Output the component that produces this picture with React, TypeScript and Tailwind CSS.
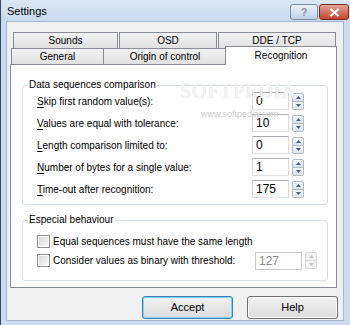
import React from 'react';

function Spin({ disabled }: { disabled?: boolean }) {
  const arrow = disabled ? '#c2c2c2' : '#4a5f86';
  const box = disabled
    ? 'flex h-[9px] items-center justify-center border border-[#d6d9dd] bg-[#f4f4f4]'
    : 'flex h-[9px] items-center justify-center border border-[#b3bbc5] bg-gradient-to-b from-[#f8fafc] to-[#dde3ea]';
  return (
    <div className="ml-[3px] flex w-[12px] flex-col">
      <div className={box + ' rounded-t-[2px]'}>
        <svg width="5" height="3" viewBox="0 0 5 3">
          <path d="M2.5 0L5 3H0z" fill={arrow} />
        </svg>
      </div>
      <div className={box + ' -mt-px rounded-b-[2px]'}>
        <svg width="5" height="3" viewBox="0 0 5 3">
          <path d="M0 0H5L2.5 3z" fill={arrow} />
        </svg>
      </div>
    </div>
  );
}

function Field({ value, disabled, w }: { value: string; disabled?: boolean; w: string }) {
  return (
    <div className="flex items-center">
      <div
        className={
          (disabled
            ? 'border-[#c9cbd0] text-[#8a8a8a] '
            : 'border-[#abadb3] border-b-[#dfe3e8] border-x-[#d5d8de] text-black ') +
          w +
          ' h-[18px] border bg-white pl-[3px] text-[12px] leading-[16px]'
        }
      >
        {value}
      </div>
      <Spin disabled={disabled} />
    </div>
  );
}

function Row({ k, rest, value }: { k: string; rest: string; value: string }) {
  return (
    <div className="flex h-[22px] items-center">
      <span className="flex-1">
        <span className="underline underline-offset-2">{k}</span>
        {rest}
      </span>
      <Field value={value} w="w-[37px]" />
    </div>
  );
}

function Check({ label }: { label: string }) {
  return (
    <div className="flex items-center">
      <div className="flex h-[13px] w-[13px] items-center justify-center border border-[#8e8f8f] bg-white">
        <div className="h-[9px] w-[9px] bg-gradient-to-br from-[#d8d8d8] to-[#f8f8f8]" />
      </div>
      <span className="ml-[3px]">{label}</span>
    </div>
  );
}

function Group({ title, children, className }: { title: string; children: React.ReactNode; className: string }) {
  return (
    <div className={'relative ml-[11px] w-[306px] rounded-[3px] border border-[#d5dfe5] ' + className}>
      <span className="absolute -top-[8px] left-[5px] bg-white px-[1px] leading-[14px]">{title}</span>
      {children}
    </div>
  );
}

const tab = 'flex h-[16px] items-center justify-center border-x border-t border-[#898c95] bg-gradient-to-b from-[#f3f3f3] to-[#e1e1e1] leading-[14px]';

export default function App() {
  return (
    <div className="flex h-[325px] w-[350px] flex-col overflow-hidden border-l border-[#3b4b5d] bg-[#cbdcf0] [font-family:Liberation_Sans,Arial,sans-serif] text-[10px] text-black">
      {/* title bar */}
      <div className="flex h-[21px] items-start bg-gradient-to-b from-[#dbe7f5] to-[#c9daee]">
        <span className="ml-[6px] mt-[4px] text-[11px] leading-[15px]">Settings</span>
        <div className="ml-auto mr-[1px] mt-[4px] flex gap-[1px]">
          <div className="flex h-[16px] w-[28px] items-center justify-center rounded-[3px] border border-[#7d8ea3] bg-gradient-to-b from-[#eaf1f9] to-[#bfd1e6] text-[11px] font-bold leading-none text-[#8a96a4]">
            ?
          </div>
          <div className="flex h-[16px] w-[30px] items-center justify-center rounded-[3px] border border-[#7c2d22] bg-gradient-to-b from-[#e4a293] to-[#c4412c]">
            <svg width="11" height="9" viewBox="0 0 11 9">
              <path d="M1.5 1L9.5 8M9.5 1L1.5 8" stroke="#fff" strokeWidth="2.2" />
            </svg>
          </div>
        </div>
      </div>

      {/* client area */}
      <div className="relative ml-[5px] flex h-[300px] w-[338px] flex-col border border-[#a3b7cf] bg-[#f0f0f0]">
        <div className="pointer-events-none absolute left-[173px] top-[59px] z-20 [font-family:Liberation_Serif,serif] text-[20px] leading-none tracking-[1px] text-[#f6f6f6] [text-shadow:0_0_1px_#cfcfcf]">
          SOFTPEDIA
        </div>
        <div className="pointer-events-none absolute left-[194px] top-[88px] z-20 text-[9px] leading-none text-[#cdcdcd]">
          www.softpedia.com
        </div>

        <div className="mt-[10px] ml-[6px] flex">
          <div className={tab + ' w-[105px]'}>Sounds</div>
          <div className={tab + ' ml-px w-[98px]'}>OSD</div>
          <div className={tab + ' ml-px w-[118px]'}>DDE / TCP</div>
        </div>
        <div className="ml-[4px] flex h-[16px] items-start">
          <div className={tab + ' w-[93px]'}>General</div>
          <div className={tab + ' -ml-px w-[124px]'}>Origin of control</div>
          <div className="relative z-10 -ml-[2px] -mt-[2px] flex h-[19px] w-[112px] justify-center border-x border-t border-[#898c95] bg-white pt-[2px] leading-[14px]">
            Recognition
          </div>
        </div>

        <div className="ml-[3px] flex h-[224px] w-[327px] flex-col border border-[#898c95] bg-white">
          <Group title="Data sequences comparison" className="mt-[20px] pl-[14px] pr-[23px] pt-[4px] pb-[4px]">
            <Row k="S" rest="kip first random value(s):" value="0" />
            <Row k="V" rest="alues are equal with tolerance:" value="10" />
            <Row k="L" rest="ength comparison limited to:" value="0" />
            <Row k="N" rest="umber of bytes for a single value:" value="1" />
            <Row k="T" rest="ime-out after recognition:" value="175" />
          </Group>

          <Group title="Especial behaviour" className="mt-[15px] pl-[14px] pr-[10px] pt-[11px] pb-[10px]">
            <div className="flex h-[19px] items-center">
              <Check label="Equal sequences must have the same length" />
            </div>
            <div className="flex h-[19px] items-center">
              <Check label="Consider values as binary with threshold:" />
              <div className="ml-auto">
                <Field value="127" w="w-[47px]" disabled />
              </div>
            </div>
          </Group>
        </div>

        <div className="mt-[8px] flex justify-end gap-[14px] pr-[5px] text-[11px]">
          <div className="flex h-[23px] w-[91px] items-center justify-center rounded-[3px] border border-[#3c7fb1] bg-gradient-to-b from-[#f2f2f2] to-[#dcdcdc] shadow-[inset_0_0_0_1px_#7fd4f7]">
            Accept
          </div>
          <div className="flex h-[23px] w-[91px] items-center justify-center rounded-[3px] border border-[#707070] bg-gradient-to-b from-[#f2f2f2] to-[#dcdcdc] shadow-[inset_0_0_0_1px_#fbfbfb]">
            Help
          </div>
        </div>
      </div>
    </div>
  );
}
